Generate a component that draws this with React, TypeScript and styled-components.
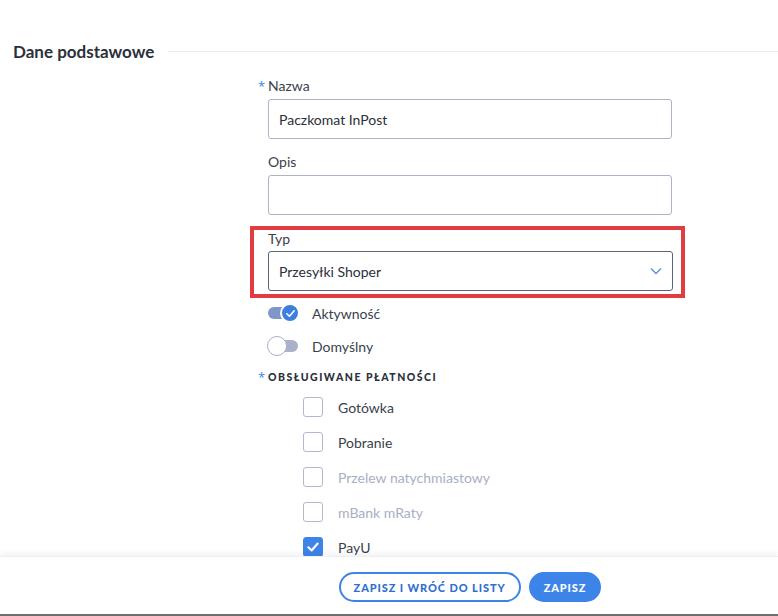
import React from 'react'
import styled, { createGlobalStyle } from 'styled-components'

const GlobalStyle = createGlobalStyle`
  html, body {
    margin: 0;
    padding: 0;
    background: #fff;
  }
  body {
    font-family: Lato, "Open Sans", sans-serif;
    color: #2f3441;
  }
`

const Page = styled.div`
  width: 778px;
  height: 616px;
  display: flex;
  flex-direction: column;
  overflow: hidden;
  border-bottom: 2px solid #6e6e6e;
  box-sizing: border-box;
`

const Content = styled.div`
  flex: 1;
  overflow: hidden;
  padding-top: 40px;
`

const SectionHeader = styled.div`
  display: flex;
  align-items: center;
  gap: 14px;
  padding-left: 13px;
  height: 22px;
`

const SectionTitle = styled.h2`
  margin: 0;
  font-size: 17px;
  font-weight: 700;
  color: #2b303b;
  white-space: nowrap;
`

const SectionLine = styled.div`
  flex: 1;
  height: 1px;
  background: #e8e9ee;
`

const Form = styled.div`
  display: flex;
  flex-direction: column;
  padding-left: 258px;
  padding-top: 14px;
  width: 414px;
`

const Field = styled.div`
  display: flex;
  flex-direction: column;
  gap: 3px;
  margin-bottom: 13px;
`

const Label = styled.label<{ $required?: boolean }>`
  font-size: 14px;
  line-height: 20px;
  color: #3a3f4c;
  padding-left: ${p => (p.$required ? 0 : 10)}px;
`

const Star = styled.span`
  display: inline-block;
  width: 10px;
  font-family: "Open Sans", sans-serif;
  font-size: 13px;
  font-weight: 400;
  letter-spacing: 0;
  color: #3d84e8;
  vertical-align: top;
  line-height: 20px;
`

const Input = styled.div<{ $dark?: boolean }>`
  margin-left: 10px;
  height: 40px;
  box-sizing: border-box;
  border: 1px solid ${p => (p.$dark ? '#5d6475' : '#aeb4c8')};
  border-radius: 3px;
  display: flex;
  align-items: center;
  justify-content: space-between;
  padding: 0 10px;
  font-size: 14px;
  color: #2b303b;
`

const Highlight = styled.div`
  margin: -2px -13px 0 -8px;
  border: 4px solid #e23b41;
  padding: 1px 8px 3px 14px;
  display: flex;
  flex-direction: column;
  gap: 4px;
  & > label {
    padding-left: 0;
    line-height: 16px;
  }
  & > div {
    margin-left: 0;
  }
`

const ToggleRow = styled.div`
  display: flex;
  align-items: center;
  gap: 14px;
  height: 20px;
  margin-left: 10px;
  margin-top: 5px;
  margin-bottom: 8px;
  font-size: 14px;
  color: #3a3f4c;
`

const Track = styled.div<{ $on?: boolean }>`
  position: relative;
  width: 30px;
  height: 12px;
  border-radius: 6px;
  background: ${p => (p.$on ? '#7d97c9' : '#aab1c8')};
`

const Thumb = styled.div<{ $on?: boolean }>`
  position: absolute;
  top: -4px;
  ${p => (p.$on ? 'right: -2px;' : 'left: -1px;')}
  width: 20px;
  height: 20px;
  box-sizing: border-box;
  border-radius: 50%;
  background: ${p => (p.$on ? '#3d7fe0' : '#fff')};
  border: ${p => (p.$on ? '2px solid #fff' : '1px solid #aab1c8')};
  display: flex;
  align-items: center;
  justify-content: center;
`

const GroupTitle = styled.div`
  margin-top: 6px;
  font-size: 10.5px;
  font-weight: 900;
  letter-spacing: 1.5px;
  text-transform: uppercase;
  color: #2b303b;
  line-height: 14px;
  height: 14px;
  display: flex;
  align-items: center;
  & > span {
    line-height: 14px;
  }
`

const Options = styled.div`
  display: flex;
  flex-direction: column;
  gap: 15px;
  margin-top: 13px;
  margin-left: 45px;
`

const Option = styled.div<{ $muted?: boolean }>`
  display: flex;
  align-items: center;
  gap: 15px;
  height: 20px;
  font-size: 14px;
  color: ${p => (p.$muted ? '#a8afc5' : '#3a3f4c')};
`

const Box = styled.div<{ $checked?: boolean }>`
  width: 20px;
  height: 20px;
  box-sizing: border-box;
  border-radius: 3px;
  border: 1px solid ${p => (p.$checked ? '#3d84e8' : '#b3b9cc')};
  background: ${p => (p.$checked ? '#3d84e8' : '#fff')};
  display: flex;
  align-items: center;
  justify-content: center;
`

const Footer = styled.div`
  height: 58px;
  box-sizing: border-box;
  background: #fff;
  box-shadow: 0 -3px 6px rgba(0, 0, 0, 0.05);
  border-top: 1px solid #eeeff2;
  padding-top: 15px;
`

const Actions = styled.div`
  margin-left: 268px;
  width: 404px;
  display: flex;
  justify-content: center;
  gap: 8px;
`

const Button = styled.button<{ $primary?: boolean }>`
  height: 30px;
  box-sizing: border-box;
  border-radius: 15px;
  padding: 0 13px;
  font-family: Lato, "Open Sans", sans-serif;
  font-size: 11px;
  font-weight: 900;
  letter-spacing: 0.9px;
  text-transform: uppercase;
  border: 2px solid #3d84e8;
  background: ${p => (p.$primary ? '#3d84e8' : '#fff')};
  color: ${p => (p.$primary ? '#fff' : '#2f6fd0')};
`

const Check = ({ size = 12 }: { size?: number }) => (
  <svg width={size} height={size} viewBox="0 0 12 12" fill="none">
    <path d="M2 6.3 L4.8 9 L10 3" stroke="#fff" strokeWidth="1.8" strokeLinecap="round" strokeLinejoin="round" />
  </svg>
)

const Chevron = () => (
  <svg width="12" height="8" viewBox="0 0 12 8" fill="none">
    <path d="M1 1.5 L6 6.5 L11 1.5" stroke="#5b8fe0" strokeWidth="1.3" />
  </svg>
)

const payments = [
  { name: 'Gotówka', muted: false, checked: false },
  { name: 'Pobranie', muted: false, checked: false },
  { name: 'Przelew natychmiastowy', muted: true, checked: false },
  { name: 'mBank mRaty', muted: true, checked: false },
  { name: 'PayU', muted: false, checked: true },
]

export default function App() {
  return (
    <>
      <GlobalStyle />
      <Page>
        <Content>
          <SectionHeader>
            <SectionTitle>Dane podstawowe</SectionTitle>
            <SectionLine />
          </SectionHeader>
          <Form>
            <Field>
              <Label $required><Star>*</Star>Nazwa</Label>
              <Input>Paczkomat InPost</Input>
            </Field>
            <Field>
              <Label>Opis</Label>
              <Input />
            </Field>
            <Highlight>
              <Label>Typ</Label>
              <Input $dark>
                Przesyłki Shoper
                <Chevron />
              </Input>
            </Highlight>
            <ToggleRow>
              <Track $on>
                <Thumb $on><Check size={11} /></Thumb>
              </Track>
              Aktywność
            </ToggleRow>
            <ToggleRow>
              <Track>
                <Thumb />
              </Track>
              Domyślny
            </ToggleRow>
            <GroupTitle><Star>*</Star>Obsługiwane płatności</GroupTitle>
            <Options>
              {payments.map(p => (
                <Option key={p.name} $muted={p.muted}>
                  <Box $checked={p.checked}>{p.checked && <Check size={14} />}</Box>
                  {p.name}
                </Option>
              ))}
            </Options>
          </Form>
        </Content>
        <Footer>
          <Actions>
            <Button>Zapisz i wróć do listy</Button>
            <Button $primary>Zapisz</Button>
          </Actions>
        </Footer>
      </Page>
    </>
  )
}
